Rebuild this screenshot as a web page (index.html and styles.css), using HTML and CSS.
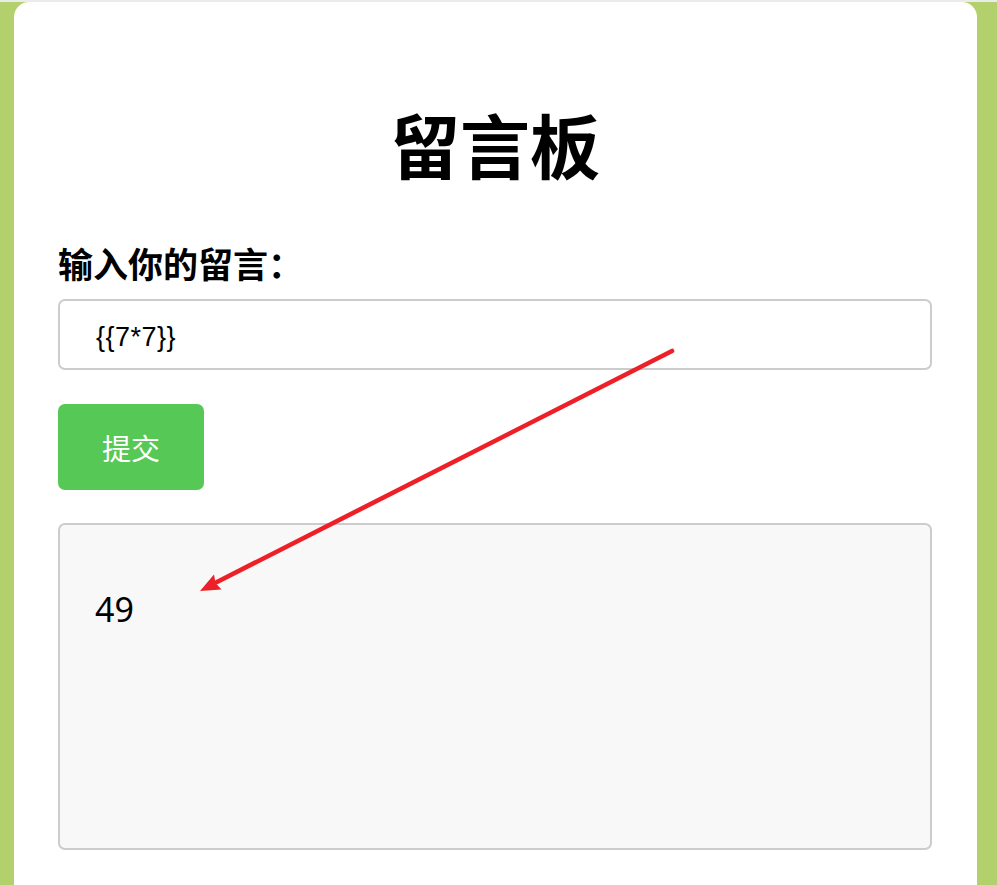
FILE: index.html
```html
<!DOCTYPE html>
<html lang="zh-CN">
<head>
<meta charset="utf-8">
<title>留言板</title>
<link rel="stylesheet" href="styles.css">
</head>
<body>
<div class="topline"></div>
<main class="card">
  <h1 class="title">留言板</h1>
  <label class="label" for="msg">输入你的留言：</label>
  <input class="field" id="msg" type="text" value="{{7*7}}">
  <button class="submit" type="button">提交</button>
  <div class="output"><p class="output-text">49</p></div>
</main>
<svg class="arrow" width="997" height="885" viewBox="0 0 997 885" aria-hidden="true">
  <line x1="672" y1="351" x2="217" y2="582" stroke="#ee2027" stroke-width="4.6" stroke-linecap="round"/>
  <polygon points="200,591 221.5,589.5 215.5,583 214,574.5" fill="#ee2027"/>
</svg>
</body>
</html>
```
FILE: styles.css
```css
html, body {
  margin: 0;
  padding: 0;
}
body {
  background: #b2d06c;
  font-family: "Noto Sans", "Noto Sans CJK SC", sans-serif;
  height: 885px;
  overflow: hidden;
  position: relative;
}
.topline {
  height: 2px;
  background: #ebebeb;
}
.card {
  margin-left: 14px;
  width: 963px;
  box-sizing: border-box;
  background: #ffffff;
  border-radius: 15px 15px 0 0;
  padding: 100px 45px 60px 44px;
  min-height: 960px;
  display: flex;
  flex-direction: column;
  align-items: flex-start;
}
.title {
  align-self: stretch;
  margin: 0;
  text-align: center;
  font-family: "Noto Sans CJK SC", sans-serif;
  font-weight: 700;
  font-size: 70px;
  line-height: 84px;
  color: #000;
}
.label {
  margin-top: 56px;
  font-family: "Noto Sans CJK SC", sans-serif;
  font-weight: 700;
  font-size: 35px;
  line-height: 42px;
  color: #000;
}
.field {
  margin-top: 15px;
  align-self: stretch;
  box-sizing: border-box;
  height: 71px;
  border: 2px solid #cccccc;
  border-radius: 7px;
  padding: 5px 32px 0 36px;
  font-family: "Liberation Sans", Arial, sans-serif;
  font-size: 27px;
  letter-spacing: 0.5px;
  color: #000;
  background: #fff;
  outline: none;
}
.submit {
  margin-top: 34px;
  width: 146px;
  height: 86px;
  border: none;
  border-radius: 7px;
  background: #55c855;
  color: #ffffff;
  font-family: "Noto Sans CJK SC", sans-serif;
  font-size: 29px;
  padding: 0;
}
.output {
  margin-top: 33px;
  align-self: stretch;
  box-sizing: border-box;
  height: 327px;
  border: 2px solid #cccccc;
  border-radius: 7px;
  background: #f8f8f8;
  padding: 61px 34px 0 35px;
}
.output-text {
  margin: 0;
  font-family: "Noto Sans", sans-serif;
  font-size: 34px;
  line-height: 46px;
  color: #000;
}
.arrow {
  position: absolute;
  left: 0;
  top: 0;
  pointer-events: none;
}
```
